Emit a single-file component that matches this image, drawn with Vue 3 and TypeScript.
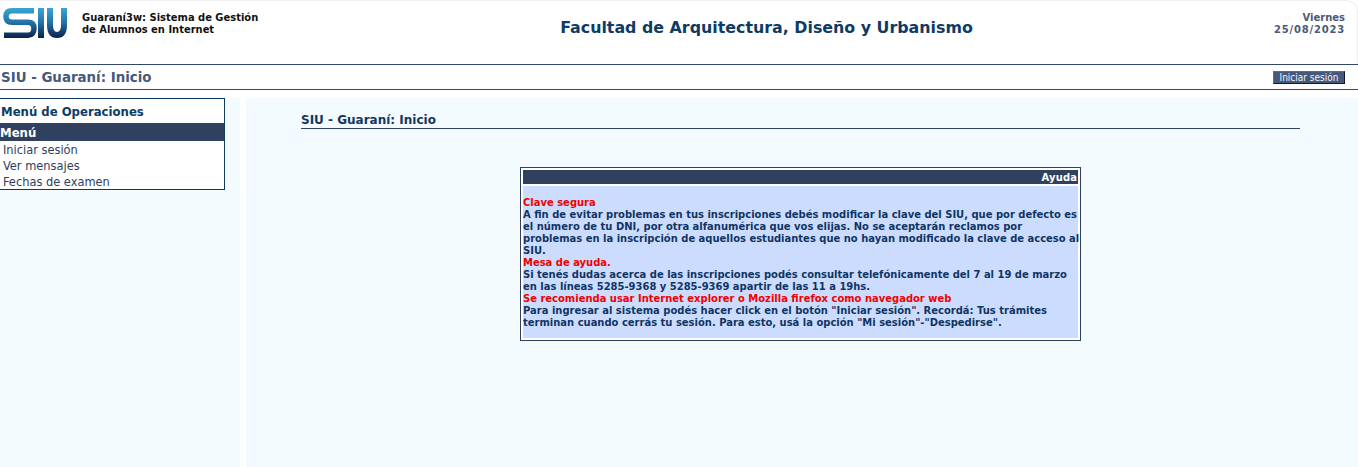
<script setup lang="ts">
const menu: string[] = ['Iniciar sesión', 'Ver mensajes', 'Fechas de examen']
</script>

<template>
  <div class="page">
    <header class="top">
      <div class="brand">
        <svg class="logo" width="64" height="32" viewBox="0 0 64 32" fill="none">
          <defs>
            <linearGradient id="siu" x1="0" y1="1" x2="0" y2="31" gradientUnits="userSpaceOnUse">
              <stop offset="0" stop-color="#3aa6d4" />
              <stop offset="0.45" stop-color="#2478aa" />
              <stop offset="1" stop-color="#0b1f4c" />
            </linearGradient>
          </defs>
          <path d="M31 3.8H9C5 3.8 3 6 3 9.5C3 13 5 15.2 9 15.2H25C29 15.2 31 17.5 31 21.5C31 25.5 29 28.2 25 28.2H1" stroke="url(#siu)" stroke-width="5.5" />
          <path d="M38 1V31" stroke="url(#siu)" stroke-width="6" />
          <path d="M47 1V18C47 25 49.5 28 54 28C58.5 28 61 25 61 18V1" stroke="url(#siu)" stroke-width="6" />
        </svg>
        <div class="sysname">Guaraní3w: Sistema de Gestión<br />de Alumnos en Internet</div>
      </div>
      <h1 class="faculty">Facultad de Arquitectura, Diseño y Urbanismo</h1>
      <div class="date">Viernes<br /><span class="date-num">25/08/2023</span></div>
    </header>

    <div class="bar">
      <span class="bar-title">SIU - Guaraní: Inicio</span>
      <a class="login">Iniciar sesión</a>
    </div>

    <div class="body">
      <aside class="side">
        <div class="menu-box">
          <div class="menu-head">Menú de Operaciones</div>
          <div class="menu-sub">Menú</div>
          <ul class="menu-list">
            <li v-for="m in menu" :key="m">{{ m }}</li>
          </ul>
        </div>
      </aside>
      <main class="main">
        <h2 class="main-title">SIU - Guaraní: Inicio</h2>
        <section class="help">
          <div class="help-head">Ayuda</div>
          <div class="help-body">
            <span class="red">Clave segura</span><br />
            A fin de evitar problemas en tus inscripciones debés modificar la clave del SIU, que por defecto es<br />
            el número de tu DNI, por otra alfanumérica que vos elijas. No se aceptarán reclamos por<br />
            problemas en la inscripción de aquellos estudiantes que no hayan modificado la clave de acceso al<br />
            SIU.<br />
            <span class="red">Mesa de ayuda.</span><br />
            Si tenés dudas acerca de las inscripciones podés consultar telefónicamente del 7 al 19 de marzo<br />
            en las líneas 5285-9368 y 5285-9369 apartir de las 11 a 19hs.<br />
            <span class="red">Se recomienda usar Internet explorer o Mozilla firefox como navegador web</span><br />
            Para ingresar al sistema podés hacer click en el botón "Iniciar sesión". Recordá: Tus trámites<br />
            terminan cuando cerrás tu sesión. Para esto, usá la opción "Mi sesión"-"Despedirse".
          </div>
        </section>
      </main>
    </div>
  </div>
</template>

<style>
html, body { margin: 0; padding: 0; background: #ffffff; overflow: hidden; }
</style>

<style scoped>
.page {
  width: 1358px;
  height: 467px;
  display: flex;
  flex-direction: column;
  font-family: "DejaVu Sans", Verdana, sans-serif;
  background: #fff;
  overflow: hidden;
}
.top {
  height: 64px;
  box-sizing: border-box;
  display: grid;
  grid-template-columns: 422px 1fr 246px;
  border-top: 1px solid #f0f0f0;
  border-right: 1px solid #f0f0f0;
  border-top-right-radius: 12px;
}
.brand {
  display: flex;
  padding: 6px 0 0 3px;
  box-sizing: border-box;
}
.logo { flex: none; }
.sysname {
  margin: 5px 0 0 15px;
  font-size: 9.95px;
  line-height: 12px;
  font-weight: 700;
  color: #111;
  white-space: nowrap;
}
.faculty {
  margin: 17px 0 0;
  text-align: center;
  font-size: 15.85px;
  line-height: 20px;
  font-weight: 700;
  color: #0d3b66;
  white-space: nowrap;
}
.date {
  padding: 11px 12px 0 0;
  text-align: right;
  font-size: 10px;
  line-height: 12px;
  font-weight: 700;
  color: #4a5a78;
}
.date-num { letter-spacing: 0.8px; }
.bar {
  height: 26px;
  box-sizing: border-box;
  border-top: 1px solid #34476a;
  border-bottom: 1px solid #34476a;
  display: flex;
  align-items: center;
  justify-content: space-between;
  padding: 0 13px 0 1px;
}
.bar-title {
  font-size: 13.4px;
  font-weight: 700;
  color: #46597a;
}
.login {
  width: 72px;
  height: 13px;
  box-sizing: border-box;
  background: #46597a;
  border-top: 1px solid #1d7fc0;
  border-left: 1px solid #1d7fc0;
  border-right: 1px solid #0a1a33;
  border-bottom: 1px solid #0a1a33;
  color: #eef5fd;
  font-size: 10px;
  font-stretch: condensed;
  line-height: 11px;
  text-align: center;
}
.body {
  flex: 1;
  display: flex;
  gap: 6px;
  padding-top: 8px;
  min-height: 0;
}
.side {
  width: 240px;
  background: #f3fbff;
  flex: none;
}
.menu-box {
  width: 225px;
  height: 92px;
  box-sizing: border-box;
  background: #fff;
  border: 1px solid #0d3b66;
  border-left: none;
}
.menu-head {
  height: 24px;
  padding-left: 1px;
  font-size: 13px;
  font-stretch: condensed;
  line-height: 25px;
  font-weight: 700;
  color: #0d3b66;
}
.menu-sub {
  height: 18px;
  background: #30415f;
  color: #fff;
  font-size: 13px;
  font-stretch: condensed;
  line-height: 20px;
  font-weight: 700;
}
.menu-list {
  list-style: none;
  margin: 0;
  padding: 1px 0 0 3px;
  font-size: 12.7px;
  font-stretch: condensed;
  line-height: 16px;
  color: #30415f;
}
.main {
  flex: 1;
  background: #f3fbff;
  padding: 13px 58px 0 55px;
  min-width: 0;
}
.main-title {
  margin: 0;
  height: 17px;
  border-bottom: 1px solid #30415f;
  font-size: 12px;
  line-height: 19px;
  font-weight: 700;
  color: #16365f;
}
.help {
  width: 561px;
  height: 174px;
  box-sizing: border-box;
  margin: 38px 0 0 219px;
  background: #fff;
  border: 1px solid #30415f;
  padding: 2px;
}
.help-head {
  height: 14px;
  background: #30415f;
  color: #fff;
  text-align: right;
  font-size: 10px;
  line-height: 15px;
  font-weight: 700;
  letter-spacing: 0.1px;
  padding-right: 1px;
}
.help-body {
  margin-top: 2px;
  height: 152px;
  box-sizing: border-box;
  background: #ccdcff;
  padding: 11px 0 0;
  font-size: 9.97px;
  line-height: 12px;
  font-weight: 700;
  color: #0f3563;
  white-space: nowrap;
}
.red { color: #f00000; }
</style>
